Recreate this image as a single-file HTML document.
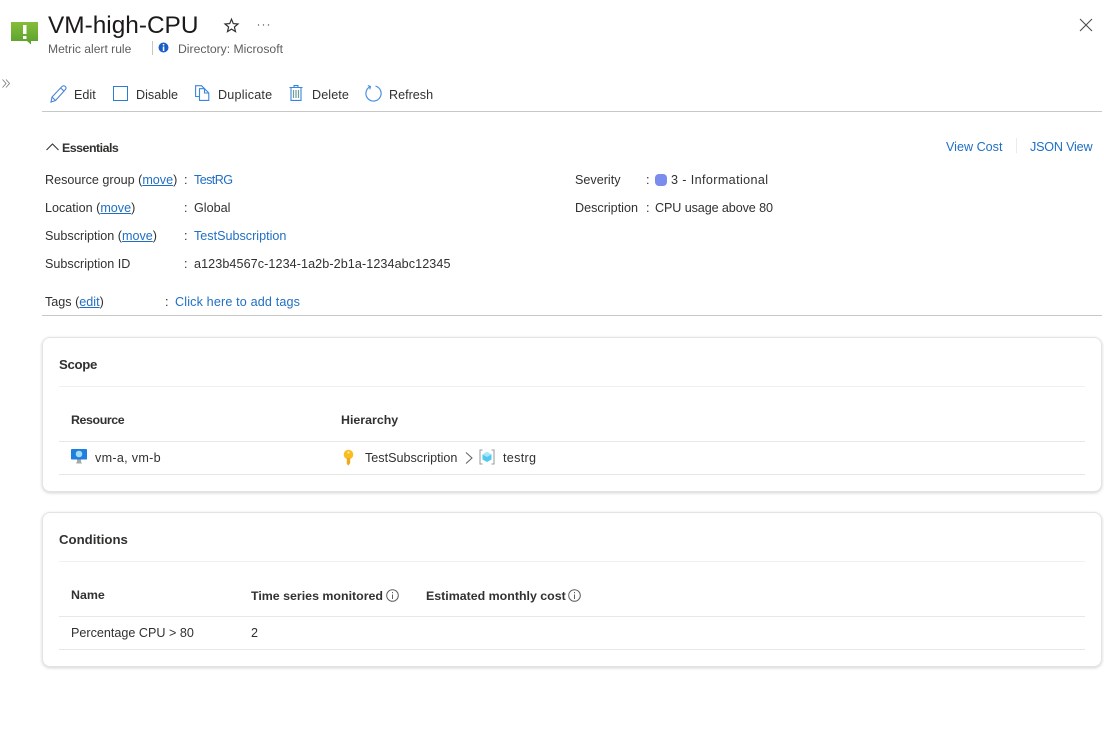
<!DOCTYPE html>
<html><head><meta charset="utf-8">
<style>
html,body{margin:0;padding:0;background:#fff;width:1104px;height:741px;overflow:hidden}
body{position:relative;font-family:"Liberation Sans",sans-serif;font-size:12.6px;color:#323130}
.t{position:absolute;white-space:nowrap;line-height:16px;margin-top:1px}
.l{color:#1f6fc4}
.u{text-decoration:underline;color:#1f6fc4}
.b{font-weight:bold;color:#323130;font-size:12.4px}
.h{position:absolute;height:1px}
.card{position:absolute;left:42px;width:1058px;background:#fff;border:1px solid #e4e4e4;border-radius:8px;box-shadow:0 1px 3px rgba(0,0,0,.18)}
svg{position:absolute;overflow:visible}
</style></head><body>

<svg style="left:11px;top:22px" width="27" height="23" viewBox="0 0 27 23"><defs><linearGradient id="g" x1="0" y1="0" x2="0" y2="1"><stop offset="0" stop-color="#86bd3a"/><stop offset="1" stop-color="#58a02e"/></linearGradient></defs><path d="M0 0H27V19H20V22.500L16 19H0Z" fill="url(#g)"/><rect x="12" y="3" width="3.500" height="9" fill="#fff"/><rect x="12" y="14" width="3.500" height="3" fill="#fff"/></svg>
<div class="t" style="left:48px;top:10px;font-size:24.400px;line-height:30px;color:#1b1a19">VM-high-CPU</div>
<svg style="left:224px;top:18px" width="15" height="15" viewBox="0 0 15 15"><path d="M7.500 1.200L9.300 5.600L14 6L10.400 9L11.500 13.600L7.500 11.100L3.500 13.600L4.600 9L1 6L5.700 5.600Z" fill="none" stroke="#323130" stroke-width="1.200"/></svg>
<svg style="left:257px;top:23px" width="13" height="4"><circle cx="1.500" cy="2" r=".7" fill="#605e5c"/><circle cx="6.500" cy="2" r=".7" fill="#605e5c"/><circle cx="11.500" cy="2" r=".7" fill="#605e5c"/></svg>
<div class="t" style="left:48px;top:40px;font-size:12.100px;color:#605e5c">Metric alert rule</div>
<div class="h" style="left:152px;top:41px;width:1px;height:14px;background:#c8c6c4"></div>
<svg style="left:158px;top:42px" width="11" height="11"><circle cx="5.500" cy="5.500" r="5" fill="#1a5fc8"/><rect x="4.800" y="2" width="1.500" height="1.500" fill="#fff"/><rect x="4.800" y="4.500" width="1.500" height="4.500" fill="#fff"/></svg>
<div class="t" style="left:178px;top:40px;font-size:12.200px;color:#605e5c">Directory: Microsoft</div>
<svg style="left:1079px;top:18px" width="14" height="14"><path d="M1 1L13 13M13 1L1 13" stroke="#4d4d4d" stroke-width="1.100"/></svg>
<svg style="left:2px;top:79px" width="8" height="9"><path d="M.5 .5L4 4.500L.5 8.500M4 .5L7.500 4.500L4 8.500" fill="none" stroke="#808080" stroke-width=".9"/></svg>

<svg style="left:50px;top:85px" width="17" height="18" viewBox="0 0 17 18"><path d="M1 17L2 12L12 1.500C13 .6 14.500 .6 15.300 1.500C16.200 2.400 16.200 3.600 15.300 4.600L5.500 15.500Z M10.800 3L14 6.200 M2 12L5.500 15.500" fill="none" stroke="#4a85d8" stroke-width="1.100"/></svg>
<div class="t" style="left:74px;top:86px">Edit</div>
<div style="position:absolute;left:113px;top:86px;width:13px;height:13px;border:1.300px solid #2b7cd3"></div>
<div class="t" style="left:136px;top:86px">Disable</div>
<svg style="left:195px;top:85px" width="15" height="16" viewBox="0 0 15 16"><path d="M4.500 11.500H.6V.7H6.500L9.500 3.700" fill="none" stroke="#3a86dc" stroke-width="1.100"/><path d="M4.500 3.700H9.500L13.800 8V15.400H4.500ZM9.500 3.700V8H13.800" fill="none" stroke="#3a86dc" stroke-width="1.100"/></svg>
<div class="t" style="left:218px;top:86px;letter-spacing:.2px">Duplicate</div>
<svg style="left:289px;top:85px" width="14" height="16" viewBox="0 0 14 16"><path d="M.5 2.500H13.500M5 2.500V.6H9V2.500M2 2.500V15.400H12V2.500" fill="none" stroke="#3a86dc" stroke-width="1.100"/><path d="M4.500 5V13M7 5V13M9.500 5V13" stroke="#6c9c9c" stroke-width="1.200"/></svg>
<div class="t" style="left:312px;top:86px;letter-spacing:.1px">Delete</div>
<svg style="left:365px;top:85px" width="17" height="17" viewBox="0 0 17 17"><path d="M5 1.700A7.600 7.600 0 1 0 10.500 1.100" fill="none" stroke="#4a90e2" stroke-width="1.200"/><path d="M2.800 .5L5.500 1.500L4.800 4.400" fill="none" stroke="#4a90e2" stroke-width="1.100"/></svg>
<div class="t" style="left:389px;top:86px">Refresh</div>
<div class="h" style="left:42px;top:111px;width:1060px;background:#c8c8c8"></div>

<svg style="left:46px;top:143px" width="13" height="8"><path d="M.5 7L6.500 1L12.500 7" fill="none" stroke="#323130" stroke-width="1"/></svg>
<div class="t b" style="left:62px;top:139px;letter-spacing:-.5px">Essentials</div>
<div class="t l" style="left:946px;top:138px">View Cost</div>
<div class="h" style="left:1016px;top:138px;width:1px;height:15px;background:#edebe9"></div>
<div class="t l" style="left:1030px;top:138px;letter-spacing:-.2px">JSON View</div>

<div class="t" style="left:45px;top:171px">Resource group (<span class="u">move</span>)</div><div class="t" style="left:184px;top:171px">:</div><div class="t l" style="left:194px;top:171px;letter-spacing:-.6px">TestRG</div>
<div class="t" style="left:45px;top:199px">Location (<span class="u">move</span>)</div><div class="t" style="left:184px;top:199px">:</div><div class="t" style="left:194px;top:199px">Global</div>
<div class="t" style="left:45px;top:227px">Subscription (<span class="u">move</span>)</div><div class="t" style="left:184px;top:227px">:</div><div class="t l" style="left:194px;top:227px">TestSubscription</div>
<div class="t" style="left:45px;top:255px">Subscription ID</div><div class="t" style="left:184px;top:255px">:</div><div class="t" style="left:194px;top:255px;letter-spacing:.08px">a123b4567c-1234-1a2b-2b1a-1234abc12345</div>
<div class="t" style="left:45px;top:293px">Tags (<span class="u">edit</span>)</div><div class="t" style="left:165px;top:293px">:</div><div class="t l" style="left:175px;top:293px;letter-spacing:.15px">Click here to add tags</div>

<div class="t" style="left:575px;top:171px">Severity</div><div class="t" style="left:646px;top:171px">:</div>
<div style="position:absolute;left:655px;top:174px;width:12px;height:12px;border-radius:4px;background:#7a8cec"></div>
<div class="t" style="left:671px;top:171px;letter-spacing:.38px">3 - Informational</div>
<div class="t" style="left:575px;top:199px">Description</div><div class="t" style="left:646px;top:199px">:</div><div class="t" style="left:655px;top:199px;letter-spacing:-.1px">CPU usage above 80</div>
<div class="h" style="left:42px;top:315px;width:1060px;background:#c8c8c8"></div>

<div class="card" style="top:337px;height:153px"></div>
<div class="t b" style="left:59px;top:356px;font-size:13.200px;letter-spacing:-.3px">Scope</div>
<div class="h" style="left:59px;top:386px;width:1026px;background:#f0f0f0"></div>
<div class="t b" style="left:71px;top:411px;letter-spacing:-.4px">Resource</div>
<div class="t b" style="left:341px;top:411px">Hierarchy</div>
<div class="h" style="left:59px;top:441px;width:1026px;background:#e8e8e8"></div>
<svg style="left:71px;top:449px" width="16" height="15" viewBox="0 0 16 15"><rect width="16" height="10.500" rx=".8" fill="#1f7fe0"/><circle cx="8" cy="5" r="3.300" fill="#9fdcf5"/><path d="M5 14.500H11L10 12.500V10.500H6V12.500Z" fill="#a8a8a8"/></svg>
<div class="t" style="left:95px;top:449px;letter-spacing:.3px">vm-a, vm-b</div>
<svg style="left:343px;top:450px" width="11" height="16" viewBox="0 0 11 16"><circle cx="5.500" cy="4.500" r="4.800" fill="#f7bd22"/><path d="M3.800 8H7.200V13L5.500 15.500L3.800 14Z" fill="#f0a81c"/><circle cx="5.500" cy="2.500" r="1.100" fill="#fde9a8"/></svg>
<div class="t" style="left:365px;top:449px">TestSubscription</div>
<svg style="left:465px;top:452px" width="8" height="12"><path d="M1 .5L7 6L1 11.500" fill="none" stroke="#605e5c" stroke-width="1"/></svg>
<svg style="left:479px;top:449px" width="16" height="16" viewBox="0 0 16 16"><path d="M3.500 1H1V15H3.500M12.500 1H15V15H12.500" fill="none" stroke="#9a9a9a" stroke-width="1"/><path d="M8 3L12.500 5.500V10.500L8 13L3.500 10.500V5.500Z" fill="#50c8ef"/><path d="M8 8L12.500 5.500L8 3L3.500 5.500Z" fill="#a5e6f8"/></svg>
<div class="t" style="left:503px;top:449px;letter-spacing:.3px">testrg</div>
<div class="h" style="left:59px;top:474px;width:1026px;background:#e8e8e8"></div>

<div class="card" style="top:512px;height:153px"></div>
<div class="t b" style="left:59px;top:531px;font-size:13.200px">Conditions</div>
<div class="h" style="left:59px;top:561px;width:1026px;background:#f0f0f0"></div>
<div class="t b" style="left:71px;top:586px">Name</div>
<div class="t b" style="left:251px;top:587px">Time series monitored</div>
<svg style="left:386px;top:589px" width="13" height="13"><circle cx="6.500" cy="6.500" r="5.800" fill="none" stroke="#605e5c"/><rect x="6" y="3" width="1" height="1.200" fill="#605e5c"/><rect x="6" y="5.500" width="1" height="4.500" fill="#605e5c"/></svg>
<div class="t b" style="left:426px;top:587px">Estimated monthly cost</div>
<svg style="left:568px;top:589px" width="13" height="13"><circle cx="6.500" cy="6.500" r="5.800" fill="none" stroke="#605e5c"/><rect x="6" y="3" width="1" height="1.200" fill="#605e5c"/><rect x="6" y="5.500" width="1" height="4.500" fill="#605e5c"/></svg>
<div class="h" style="left:59px;top:616px;width:1026px;background:#e8e8e8"></div>
<div class="t" style="left:71px;top:624px">Percentage CPU &gt; 80</div>
<div class="t" style="left:251px;top:624px">2</div>
<div class="h" style="left:59px;top:649px;width:1026px;background:#e8e8e8"></div>
</body></html>
